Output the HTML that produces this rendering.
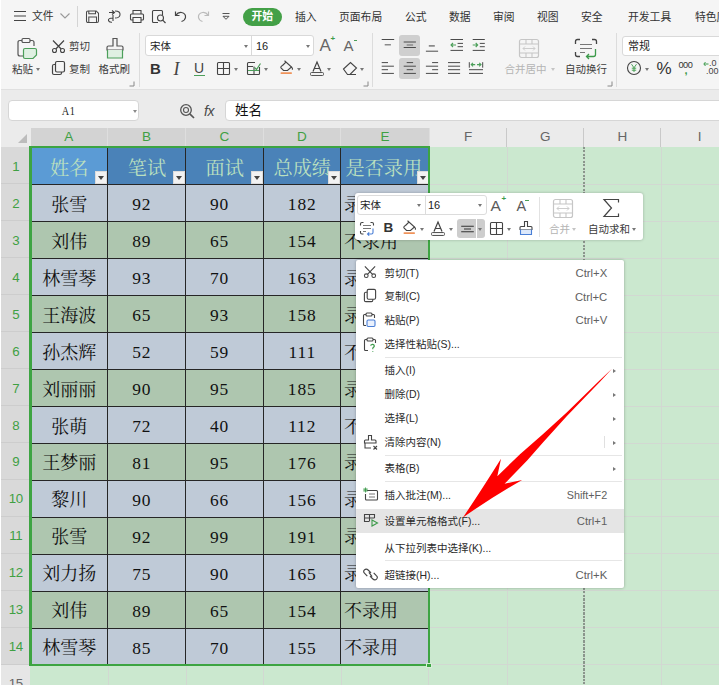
<!DOCTYPE html>
<html lang="zh-CN">
<head>
<meta charset="utf-8">
<title>WPS 表格</title>
<style>
html,body{margin:0;padding:0;}
body{width:719px;height:685px;overflow:hidden;background:#fff;}
#app{position:relative;width:719px;height:685px;overflow:hidden;background:#ebebeb;
 font-family:"Liberation Sans","Noto Sans CJK SC",sans-serif;color:#333;}
#app div,#app span,#app i,#app u,#app b,#app svg{position:absolute;box-sizing:border-box;}
#app u{text-decoration:none;}
#app i{font-style:normal;}
#app b{font-weight:normal;}
/* ---------- ribbon ---------- */
#ribbon{left:0;top:0;width:719px;height:89.5px;background:#f5f5f5;}
#ribbon .whiteedge{left:0;top:0;width:1.2px;height:89.5px;background:#fff;}
.t{white-space:nowrap;line-height:1;}
.menu{top:10.5px;font-size:10.8px;color:#333;}
.lbl{font-size:10.5px;color:#3c3c3c;}
.dis{color:#b4b4b4;}
.vsep{width:1px;background:#dcdcdc;}
.inp{background:#fff;border:1px solid #d9d9d9;border-radius:3px;}
.caret{width:0;height:0;border-left:2.5px solid transparent;border-right:2.5px solid transparent;border-top:3px solid #777;}
.hl{background:#cfcfcf;border-radius:3px;}
/* ---------- formula bar ---------- */
#fbar{left:0;top:89.300px;width:719px;height:38.700px;background:#ebebeb;border-top:1px solid #e0e0e0;}
#fbar .whiteedge{left:0;top:0;width:1.2px;height:60px;background:#fff;}
#namebox{left:8px;top:10.200px;width:131px;height:20.500px;background:#fff;border-radius:4px;border:1px solid #d6d6d6;}
#namebox .t{left:0;width:119px;top:4px;text-align:center;font-family:"Liberation Serif","Noto Serif CJK SC",serif;font-size:12.500px;letter-spacing:0.600px;color:#222;transform:scaleX(0.820);}
#finput{left:225px;top:10.200px;width:500px;height:20.500px;background:#fff;border-radius:4px;border:1px solid #d6d6d6;}
#finput .t{left:9px;top:2.5px;font-size:13.5px;color:#111;}
/* ---------- sheet ---------- */
#sheet{left:0;top:0;width:719px;height:685px;}
#app:after{content:"";position:absolute;left:0;top:0;width:1.2px;height:685px;background:#fff;}
#sheet:before{content:"";position:absolute;left:30px;top:147px;width:689px;height:538px;background:#cbe8cf;}
.colhdr-bg{left:0;top:128px;width:719px;height:19px;background:#ebebeb;}
.corner{left:1.200px;top:128px;width:29px;height:19px;background:transparent;}
.corner i{right:3.700px;bottom:4px;width:0;height:0;border-left:9.500px solid transparent;border-bottom:9.500px solid #bcbcbc;}
.ch{top:128.200px;height:18.800px;line-height:18px;text-align:center;font-size:13.5px;color:#666;border-right:1px solid #c9c9c9;}
.ch.sel{background:#d3d3d3;color:#3fa043;border-right:1px solid #dedede;}
.rh{left:1.2px;width:29px;padding-top:2px;text-align:center;font-size:13.300px;letter-spacing:-0.400px;color:#666;background:#e6e6e6;border-bottom:1px solid #cfcfcf;display:flex;align-items:center;justify-content:center;}
.rh.sel{background:#d9d9d9;color:#3fa043;border-bottom:1px solid #cdcdcd;}
.gv{top:147px;width:1px;height:540px;background:#d2d8d2;}
.gh{left:30px;width:690px;height:1px;background:#d2d8d2;}
.pagebreak{left:583.400px;top:147px;width:1.300px;height:540px;background:repeating-linear-gradient(to bottom,#8a968c 0,#8a968c 2px,transparent 2px,transparent 3.500px);}
.c{font-family:"Liberation Serif","Noto Serif CJK SC",serif;font-size:18px;color:#111;display:flex;align-items:center;justify-content:center;}
.c span{position:static !important;white-space:nowrap;transform:translateY(0px);}
.c.n span{transform:translateY(1.900px);font-size:17.400px;letter-spacing:0.900px;}
.c.h{background:#4a82b8;color:#bbe0bf;font-size:19.2px;}
.c.h.e{padding-right:3.5px;}
.c.h.a1{background:#5b9bd5;}
.c.h span{transform:translateY(0.600px);}
.c.b{background:#bfcad7;}
.c.g{background:#aec6af;}
.c.n2{padding-right:10.5px;}
.c.l{justify-content:flex-start;padding-left:3px;}
.dd{right:1px;bottom:0.6px;width:12px;height:12.5px;background:#f2f2f2;border:1px solid #dcdcdc;}
.dd:after{content:"";position:absolute;left:2px;top:3.500px;width:0;height:0;border-left:3px solid transparent;border-right:3px solid transparent;border-top:4px solid #444;}
.bv{top:147px;width:1.100px;height:518px;background:#262626;}
.bh{left:30px;width:400px;height:1.100px;background:#262626;}
.selbox{border:2.500px solid #3da442;border-left-width:3.300px;}
.selhandle{width:3.500px;height:3.500px;background:#3da442;border:1px solid #d8eeda;box-sizing:content-box !important;}
/* ---------- mini toolbar ---------- */
#mini{left:355px;top:192.800px;width:288px;height:47.200px;background:#fff;border-radius:3px;box-shadow:0 0 3px rgba(0,0,0,.25);}
/* ---------- context menu ---------- */
#ctx{left:355.500px;top:259.800px;width:268.700px;height:328.100px;background:#fff;border-radius:2px;box-shadow:0 0 3px rgba(0,0,0,.3);}
.mi{left:0;width:268px;height:24px;margin-top:0.700px;}
.mi .t{left:29px;top:6.500px;font-size:10.500px;color:#2a2a2a;}
.mi .k{left:auto;right:16.300px;top:6.800px;font-size:11.300px;color:#606060;}
.mi.on{background:#e5e5e5;left:0;width:268.500px;}
.msep{left:29px;width:237px;height:1px;background:#e6e6e6;margin-top:0.700px;}
.arr{right:7.600px;width:0;height:0;margin-top:0.800px;border-top:2.600px solid transparent;border-bottom:2.600px solid transparent;border-left:3.300px solid #777;}

</style>
</head>
<body>
<div id="app">
<div id="ribbon">
<div class="whiteedge"></div>
<!-- row 1 : quick access + tabs -->
<svg style="left:13px;top:10px" width="14" height="12" viewBox="0 0 14 12"><path d="M1 1.5H13M1 6H13M1 10.5H13" stroke="#444" stroke-width="1.2" fill="none"/></svg>
<span class="t menu" style="left:32px">文件</span>
<svg style="left:59px;top:12px" width="12" height="8" viewBox="0 0 12 8"><path d="M1.5 1.5L6 6L10.5 1.5" stroke="#999" stroke-width="1.1" fill="none"/></svg>
<div class="vsep" style="left:77px;top:6px;height:21px;background:#d4d4d4"></div>
<!-- save -->
<svg style="left:85px;top:9px" width="15" height="15" viewBox="0 0 15 15"><path d="M3 2H11.200L13.500 4.300V12Q13.500 13.500 12 13.500H3Q1.500 13.500 1.500 12V3.500Q1.500 2 3 2ZM3.800 2V4.800H10.500V2.200M3.800 13.500V8H11.500V13.500" stroke="#4a4a4a" stroke-width="1.050" fill="none"/></svg>
<!-- export-ish -->
<svg style="left:106px;top:9px" width="16" height="15" viewBox="0 0 16 15"><path d="M3 3.5H8M6 1.5L8.5 3.5L6 5.5M9 2Q14.5 2 14 6Q13.5 9 9 9M7 6V12M7 9Q2 9 2.5 11.5Q3 13.5 6 13.2" stroke="#444" stroke-width="1.1" fill="none"/></svg>
<!-- print -->
<svg style="left:129px;top:9px" width="16" height="15" viewBox="0 0 16 15"><path d="M4 5V1.5H12V5M4 11H2.5Q1.5 11 1.5 10V6Q1.5 5 2.5 5H13.5Q14.5 5 14.5 6V10Q14.5 11 13.5 11H12M4 8.5H12V13.5H4Z" stroke="#444" stroke-width="1.1" fill="none"/></svg>
<!-- preview -->
<svg style="left:151px;top:9px" width="16" height="15" viewBox="0 0 16 15"><path d="M11.5 6V2.5Q11.5 1.5 10.5 1.5H2.5Q1.5 1.5 1.5 2.5V12.5Q1.5 13.5 2.5 13.5H7" stroke="#444" stroke-width="1.1" fill="none"/><circle cx="9.5" cy="9" r="3" stroke="#444" stroke-width="1.1" fill="none"/><path d="M11.7 11.2L14.5 14" stroke="#444" stroke-width="1.2"/></svg>
<!-- undo -->
<svg style="left:174px;top:10px" width="14" height="13" viewBox="0 0 14 13"><path d="M1.5 1.5V5.5H5.5M1.8 5.3Q4 2 7.5 2.5Q12 3.5 11.5 7.5Q11 10.5 7.5 11.5" stroke="#444" stroke-width="1.2" fill="none"/></svg>
<!-- redo -->
<svg style="left:196px;top:10px" width="14" height="13" viewBox="0 0 14 13"><path d="M12.5 1.5V5.5H8.5M12.2 5.3Q10 2 6.5 2.5Q2 3.5 2.5 7.5Q3 10.5 6.5 11.5" stroke="#bbb" stroke-width="1.2" fill="none"/></svg>
<!-- more -->
<svg style="left:219.500px;top:11.500px" width="12" height="11" viewBox="0 0 12 11"><path d="M2.500 1.500H9.500M3 4.300H9L6 7.300Z" stroke="#555" stroke-width="1" fill="none"/></svg>
<div style="left:243px;top:7.5px;width:38.5px;height:18px;border-radius:9px;background:#43a047"></div>
<span class="t menu" style="left:251.500px;color:#fff;font-weight:bold;font-size:10.800px;top:11px">开始</span>
<span class="t menu" style="left:295px;top:11.500px">插入</span>
<span class="t menu" style="left:339px;top:11.500px">页面布局</span>
<span class="t menu" style="left:405px;top:11.500px">公式</span>
<span class="t menu" style="left:449px;top:11.500px">数据</span>
<span class="t menu" style="left:493px;top:11.500px">审阅</span>
<span class="t menu" style="left:537px;top:11.500px">视图</span>
<span class="t menu" style="left:581px;top:11.500px">安全</span>
<span class="t menu" style="left:628px;top:11.500px">开发工具</span>
<span class="t menu" style="left:695px;top:11.500px">特色应用</span>

<!-- clipboard group -->
<svg style="left:16px;top:36.500px" width="22" height="24" viewBox="0 0 22 24"><path d="M6 3.5H4Q2 3.5 2 5.5V17Q2 19 4 19H7" stroke="#555" stroke-width="1.2" fill="none"/><path d="M14 3.5H16Q18 3.5 18 5.5V9" stroke="#555" stroke-width="1.2" fill="none"/><rect x="6" y="1.5" width="8" height="4" rx="1.2" stroke="#555" stroke-width="1.2" fill="#f5f5f5"/><path d="M9 11.5H19Q20.5 11.5 20.5 13V18L17 21.5H9Q7.5 21.5 7.5 20V13Q7.5 11.5 9 11.5Z" stroke="#4c9f5a" stroke-width="1.2" fill="#dff0e2"/></svg>
<span class="t lbl" style="left:12px;top:64px">粘贴</span>
<i class="caret" style="left:36px;top:68px"></i>
<!-- cut -->
<svg style="left:51px;top:38.500px" width="15" height="15" viewBox="0 0 15 15"><path d="M2 1.5L10.2 10M13 1.5L4.8 10" stroke="#444" stroke-width="1.2" fill="none"/><circle cx="3.5" cy="11.5" r="2" stroke="#444" stroke-width="1.1" fill="none"/><circle cx="11.5" cy="11.5" r="2" stroke="#444" stroke-width="1.1" fill="none"/></svg>
<span class="t lbl" style="left:69px;top:41.200px">剪切</span>
<!-- copy -->
<svg style="left:51px;top:60px" width="15" height="16" viewBox="0 0 15 16"><rect x="4.5" y="1.5" width="9" height="10.5" rx="1.5" stroke="#444" stroke-width="1.2" fill="none"/><path d="M4.5 4.5H3Q1.5 4.5 1.5 6V13Q1.5 14.5 3 14.5H9Q10.5 14.5 10.5 13V12" stroke="#444" stroke-width="1.2" fill="none"/></svg>
<span class="t lbl" style="left:69px;top:64px">复制</span>
<!-- format painter -->
<svg style="left:105px;top:37px" width="20" height="23" viewBox="0 0 20 23"><path d="M8 1.5H12V9H16.5Q18 9 18 10.5V13H2V10.5Q2 9 3.5 9H8Z" stroke="#555" stroke-width="1.2" fill="none"/><path d="M2.5 13V21H17.5V13" stroke="#4c9f5a" stroke-width="1.2" fill="#dff0e2"/></svg>
<span class="t lbl" style="left:98.5px;top:64px">格式刷</span>
<svg style="left:129px;top:81px" width="6" height="6" viewBox="0 0 6 6"><path d="M5 0.5V5H0.5" stroke="#888" stroke-width="1" fill="none"/></svg>
<div class="vsep" style="left:139px;top:33px;height:54px"></div>

<!-- font group -->
<div class="inp" style="left:145px;top:35px;width:169px;height:21px"></div>
<div class="vsep" style="left:251px;top:35.500px;height:20px;background:#d9d9d9"></div>
<span class="t" style="left:150px;top:41px;font-size:10.500px;color:#222">宋体</span>
<i class="caret" style="left:244px;top:45px"></i>
<span class="t" style="left:256px;top:41px;font-size:11px;color:#222">16</span>
<i class="caret" style="left:306px;top:45px"></i>
<span class="t" style="left:319.500px;top:37px;font-size:17px;color:#666">A</span>
<span class="t" style="left:330.5px;top:34.5px;font-size:8px;color:#3c9a4a;font-weight:bold">+</span>
<span class="t" style="left:343.500px;top:38px;font-size:15px;color:#666">A</span>
<div style="left:353.500px;top:39.500px;width:3.500px;height:1.200px;background:#4c9f5a"></div>
<span class="t" style="left:150px;top:61px;font-size:15px;color:#333;font-weight:bold">B</span>
<span class="t" style="left:173.500px;top:59.500px;font-size:18px;color:#444;font-style:italic;font-family:'Liberation Serif',serif">I</span>
<span class="t" style="left:194px;top:61px;font-size:14px;color:#444">U</span>
<div style="left:194px;top:75px;width:10.5px;height:1.2px;background:#4c9f5a"></div>
<!-- borders -->
<svg style="left:216px;top:61px" width="15" height="15" viewBox="0 0 15 15"><rect x="1.5" y="1.5" width="12" height="12" rx="1" stroke="#444" stroke-width="1.1" fill="none"/><path d="M7.5 1.5V13.5M1.5 7.5H13.5" stroke="#444" stroke-width="1.1"/></svg>
<i class="caret" style="left:234px;top:68px"></i>
<!-- table style -->
<svg style="left:246px;top:61px" width="16" height="15" viewBox="0 0 16 15"><path d="M13.5 6V12.5Q13.5 13.5 12.5 13.5H2.5Q1.5 13.5 1.5 12.5V2.5Q1.5 1.5 2.5 1.5H9M1.5 5.5H7M8 5.5V13.5" stroke="#444" stroke-width="1.1" fill="none"/><path d="M2 9.5H13M8.5 6.5L10.5 8.5L14.5 2.5" stroke="#4c9f5a" stroke-width="1.2" fill="none"/></svg>
<i class="caret" style="left:264px;top:68px"></i>
<!-- fill -->
<svg style="left:278px;top:60px" width="17" height="17" viewBox="0 0 17 17"><path d="M4.500 5.500L8 2L13.500 7L9.500 10.500H5.500L3 8Q2.200 6.800 4.500 5.500Z M8 2L6.500 0.800M13.500 7Q15 8.300 14.300 9.800" stroke="#444" stroke-width="1.100" fill="none"/><rect x="2.500" y="12.300" width="11.500" height="1.700" rx="0.800" fill="#f0935a"/></svg>
<i class="caret" style="left:297px;top:68px"></i>
<!-- font color -->
<svg style="left:309px;top:60px" width="16" height="17" viewBox="0 0 16 17"><path d="M4 11.5L8 2L12 11.5M5.5 8.5H10.5" stroke="#444" stroke-width="1.2" fill="none"/><rect x="1.5" y="12.5" width="13" height="3" rx="1" stroke="#555" stroke-width="1" fill="#f2f2f2"/></svg>
<i class="caret" style="left:327px;top:68px"></i>
<!-- eraser -->
<svg style="left:342px;top:61px" width="16" height="15" viewBox="0 0 16 15"><path d="M1.5 8L8.5 1.5L14.5 7L8 13.5H5.5Z M6 13.5H14" stroke="#444" stroke-width="1.1" fill="none"/></svg>
<i class="caret" style="left:360px;top:68px"></i>
<svg style="left:363px;top:81px" width="6" height="6" viewBox="0 0 6 6"><path d="M5 0.5V5H0.5" stroke="#888" stroke-width="1" fill="none"/></svg>
<div class="vsep" style="left:372px;top:33px;height:54px"></div>

<!-- alignment group -->
<div class="hl" style="left:399.2px;top:35px;width:21.2px;height:21px"></div>
<div class="hl" style="left:399.2px;top:58px;width:21.2px;height:20.800px"></div>
<svg style="left:375px;top:30px" width="120" height="55" viewBox="0 0 120 55">
<g stroke="#4a4a4a" stroke-width="1" fill="none">
<path d="M6.7 9.5H19.2M28.7 12.0H40.9M28.7 17.5H40.9M50.9 21.2H63.1M75.5 9.5H88.0M82.6 13.4H88.0M82.6 16.7H88.0M75.5 20.4H88.0M97.7 9.5H109.8M104.8 13.4H109.8M104.8 16.7H109.8M97.7 20.4H109.8M6.7 32.6H13.0M6.7 36.2H18.9M6.7 39.7H13.0M6.7 43.4H18.9M31.7 32.6H38.1M28.7 36.2H40.9M31.7 39.7H38.1M28.7 43.4H40.9M57.1 32.6H63.1M50.9 36.2H63.1M57.1 39.7H63.1M50.9 43.4H63.1M73.0 32.6H85.1M73.0 36.2H85.1M73.0 39.7H85.1M73.0 43.4H85.1M94.0 39.7H108.0M94.0 43.4H108.0M94.3 32.2V37.7M107.7 32.2V37.7"/>
</g>
<g stroke="#8a8a8a" stroke-width="1.6" fill="none">
<path d="M9.7 14.7H15.9M31.7 15.0H38.1M53.8 15.9H59.8"/>
</g>
<g stroke="#4c9f5a" stroke-width="1.1" fill="none">
<path d="M76 15H81M78 13L76 15L78 17"/>
<path d="M97.700 15H102.700M100.700 13L102.700 15L100.700 17"/>
<path d="M96.200 34.600H100.200M98 32.800L96.200 34.600L98 36.400M102 34.600H106M104.200 32.800L106 34.600L104.200 36.400"/>
</g>
</svg>
<!-- merge center (disabled) -->
<svg style="left:518px;top:38px" width="22" height="21" viewBox="0 0 22 21"><rect x="1.500" y="1.500" width="19" height="18" rx="2" stroke="#c6c6c6" stroke-width="1.2" fill="none"/><path d="M1.500 6H20.500M1.500 15H20.500M8 1.500V6M14 1.500V6M8 15V19.500M14 15V19.500" stroke="#c6c6c6" stroke-width="1.100" fill="none"/><path d="M5 10.500H17M7 8.500L5 10.500L7 12.500M15 8.500L17 10.500L15 12.500" stroke="#cdcdcd" stroke-width="1" fill="none"/></svg>
<span class="t lbl dis" style="left:504.500px;top:64px">合并居中</span>
<i class="caret" style="left:551px;top:68px;border-top-color:#c4c4c4"></i>
<!-- wrap text -->
<svg style="left:574px;top:38px" width="24" height="22" viewBox="0 0 24 22"><path d="M6 1.500H3.500Q1.500 1.500 1.500 3.500V6M18 1.500H20.500Q22.500 1.500 22.500 3.500V6M1.500 14V16.500Q1.500 18.500 3.500 18.500H6" stroke="#444" stroke-width="1.300" fill="none"/><path d="M6 6.500H18M6 10.500H18M6 14.500H11" stroke="#777" stroke-width="1.100" fill="none"/><path d="M21.500 11V16.500Q21.500 18.500 19.500 18.500H12.500M15 16L12.500 18.500L15 21" stroke="#3c9a4a" stroke-width="1.300" fill="none"/></svg>
<span class="t lbl" style="left:565px;top:64px">自动换行</span>
<svg style="left:607px;top:81px" width="6" height="6" viewBox="0 0 6 6"><path d="M5 0.500V5H0.500" stroke="#888" stroke-width="1" fill="none"/></svg>
<div class="vsep" style="left:616px;top:33px;height:54px"></div>
<!-- number group -->
<div class="inp" style="left:622px;top:35.500px;width:110px;height:20.500px"></div>
<span class="t" style="left:628px;top:41px;font-size:11px;color:#222">常规</span>
<svg style="left:626px;top:60px" width="16" height="16" viewBox="0 0 16 16"><circle cx="8" cy="8" r="6.500" stroke="#444" stroke-width="1.100" fill="none"/><path d="M5.500 4.200L8 7.800L10.500 4.200M8 7.800V12M5.800 8.200H10.200M5.800 10.200H10.200" stroke="#3c9a4a" stroke-width="0.900" fill="none"/></svg>
<i class="caret" style="left:645px;top:68px"></i>
<span class="t" style="left:656.500px;top:60px;font-size:17px;color:#333">%</span>
<span class="t" style="left:678.500px;top:60.500px;font-size:9.200px;color:#333;letter-spacing:-0.500px">000</span>
<span class="t" style="left:684.500px;top:65px;font-size:11px;color:#3c9a4a;font-weight:bold">,</span>
<span class="t" style="left:709px;top:59px;font-size:9px;color:#444">.0</span>
<span class="t" style="left:706px;top:67px;font-size:9px;color:#444">.00</span>
<svg style="left:703px;top:61px" width="6" height="6" viewBox="0 0 6 6"><path d="M5.500 3H1M2.500 1L0.800 3L2.500 5" stroke="#3c9a4a" stroke-width="1" fill="none"/></svg>
</div>

<div id="fbar">
<div class="whiteedge"></div>
<div id="namebox"><span class="t">A1</span><i class="caret" style="left:123.500px;top:8.500px;border-top-color:#8a8a8a"></i></div>
<svg style="left:178.500px;top:12.500px" width="17" height="17" viewBox="0 0 17 17"><circle cx="7" cy="7" r="5.300" stroke="#555" stroke-width="1.300" fill="none"/><circle cx="7" cy="7" r="2.500" stroke="#555" stroke-width="1.100" fill="none"/><path d="M10.800 10.800L15 15" stroke="#555" stroke-width="1.700"/></svg>
<span class="t" style="left:204px;top:13.300px;font-size:14px;color:#4a4a4a;font-style:italic;letter-spacing:-0.300px">fx</span>
<div id="finput"><span class="t">姓名</span></div>
</div>
<div id="sheet">
<div class="colhdr-bg"></div>
<div class="corner"><i></i></div>
<div class="ch sel" style="left:30.5px;width:77.5px">A</div>
<div class="ch sel" style="left:108px;width:78px">B</div>
<div class="ch sel" style="left:186px;width:77.5px">C</div>
<div class="ch sel" style="left:263.5px;width:77.5px">D</div>
<div class="ch sel" style="left:341px;width:89px">E</div>
<div class="ch" style="left:430px;width:77px">F</div>
<div class="ch" style="left:507px;width:77.29999999999995px">G</div>
<div class="ch" style="left:584.3px;width:77.20000000000005px">H</div>
<div class="ch" style="left:661.5px;width:77.5px">I</div>
<div class="rh sel" style="top:147.25px;height:36.97px">1</div>
<div class="rh sel" style="top:184.22px;height:36.97px">2</div>
<div class="rh sel" style="top:221.19px;height:36.97px">3</div>
<div class="rh sel" style="top:258.16px;height:36.97px">4</div>
<div class="rh sel" style="top:295.13px;height:36.97px">5</div>
<div class="rh sel" style="top:332.10px;height:36.97px">6</div>
<div class="rh sel" style="top:369.07px;height:36.97px">7</div>
<div class="rh sel" style="top:406.04px;height:36.97px">8</div>
<div class="rh sel" style="top:443.01px;height:36.97px">9</div>
<div class="rh sel" style="top:479.98px;height:36.97px">10</div>
<div class="rh sel" style="top:516.95px;height:36.97px">11</div>
<div class="rh sel" style="top:553.92px;height:36.97px">12</div>
<div class="rh sel" style="top:590.89px;height:36.97px">13</div>
<div class="rh sel" style="top:627.86px;height:36.97px">14</div>
<div class="rh" style="top:664.83px;height:36.97px">15</div>
<div class="rh" style="top:701.80px;height:36.97px">16</div>
<div class="gv" style="left:107.5px"></div>
<div class="gv" style="left:185.5px"></div>
<div class="gv" style="left:263.0px"></div>
<div class="gv" style="left:340.5px"></div>
<div class="gv" style="left:428.4px"></div>
<div class="gv" style="left:506.5px"></div>
<div class="gv" style="left:583.8px"></div>
<div class="gv" style="left:661.0px"></div>
<div class="gh" style="top:183.72px"></div>
<div class="gh" style="top:220.69px"></div>
<div class="gh" style="top:257.66px"></div>
<div class="gh" style="top:294.63px"></div>
<div class="gh" style="top:331.60px"></div>
<div class="gh" style="top:368.57px"></div>
<div class="gh" style="top:405.54px"></div>
<div class="gh" style="top:442.51px"></div>
<div class="gh" style="top:479.48px"></div>
<div class="gh" style="top:516.45px"></div>
<div class="gh" style="top:553.42px"></div>
<div class="gh" style="top:590.39px"></div>
<div class="gh" style="top:627.36px"></div>
<div class="gh" style="top:664.33px"></div>
<div class="gh" style="top:701.30px"></div>
<div class="pagebreak"></div>
<div class="c h a1" style="left:30.5px;top:147.25px;width:77.5px;height:36.97px"><span>姓名</span><u class="dd"></u></div>
<div class="c h" style="left:108px;top:147.25px;width:78px;height:36.97px"><span>笔试</span><u class="dd"></u></div>
<div class="c h" style="left:186px;top:147.25px;width:77.5px;height:36.97px"><span>面试</span><u class="dd"></u></div>
<div class="c h" style="left:263.5px;top:147.25px;width:77.5px;height:36.97px"><span>总成绩</span><u class="dd"></u></div>
<div class="c h e" style="left:341px;top:147.25px;width:89px;height:36.97px"><span>是否录用</span><u class="dd"></u></div>
<div class="c b" style="left:30.5px;top:184.22px;width:77.5px;height:36.97px"><span>张雪</span></div>
<div class="c b n n2" style="left:108px;top:184.22px;width:78px;height:36.97px"><span>92</span></div>
<div class="c b n n2" style="left:186px;top:184.22px;width:77.5px;height:36.97px"><span>90</span></div>
<div class="c b n" style="left:263.5px;top:184.22px;width:77.5px;height:36.97px"><span>182</span></div>
<div class="c b l" style="left:341px;top:184.22px;width:89px;height:36.97px"><span>录用</span></div>
<div class="c g" style="left:30.5px;top:221.19px;width:77.5px;height:36.97px"><span>刘伟</span></div>
<div class="c g n n2" style="left:108px;top:221.19px;width:78px;height:36.97px"><span>89</span></div>
<div class="c g n n2" style="left:186px;top:221.19px;width:77.5px;height:36.97px"><span>65</span></div>
<div class="c g n" style="left:263.5px;top:221.19px;width:77.5px;height:36.97px"><span>154</span></div>
<div class="c g l" style="left:341px;top:221.19px;width:89px;height:36.97px"><span>不录用</span></div>
<div class="c b" style="left:30.5px;top:258.16px;width:77.5px;height:36.97px"><span>林雪琴</span></div>
<div class="c b n n2" style="left:108px;top:258.16px;width:78px;height:36.97px"><span>93</span></div>
<div class="c b n n2" style="left:186px;top:258.16px;width:77.5px;height:36.97px"><span>70</span></div>
<div class="c b n" style="left:263.5px;top:258.16px;width:77.5px;height:36.97px"><span>163</span></div>
<div class="c b l" style="left:341px;top:258.16px;width:89px;height:36.97px"><span>录用</span></div>
<div class="c g" style="left:30.5px;top:295.13px;width:77.5px;height:36.97px"><span>王海波</span></div>
<div class="c g n n2" style="left:108px;top:295.13px;width:78px;height:36.97px"><span>65</span></div>
<div class="c g n n2" style="left:186px;top:295.13px;width:77.5px;height:36.97px"><span>93</span></div>
<div class="c g n" style="left:263.5px;top:295.13px;width:77.5px;height:36.97px"><span>158</span></div>
<div class="c g l" style="left:341px;top:295.13px;width:89px;height:36.97px"><span>录用</span></div>
<div class="c b" style="left:30.5px;top:332.10px;width:77.5px;height:36.97px"><span>孙杰辉</span></div>
<div class="c b n n2" style="left:108px;top:332.10px;width:78px;height:36.97px"><span>52</span></div>
<div class="c b n n2" style="left:186px;top:332.10px;width:77.5px;height:36.97px"><span>59</span></div>
<div class="c b n" style="left:263.5px;top:332.10px;width:77.5px;height:36.97px"><span>111</span></div>
<div class="c b l" style="left:341px;top:332.10px;width:89px;height:36.97px"><span>不录用</span></div>
<div class="c g" style="left:30.5px;top:369.07px;width:77.5px;height:36.97px"><span>刘丽丽</span></div>
<div class="c g n n2" style="left:108px;top:369.07px;width:78px;height:36.97px"><span>90</span></div>
<div class="c g n n2" style="left:186px;top:369.07px;width:77.5px;height:36.97px"><span>95</span></div>
<div class="c g n" style="left:263.5px;top:369.07px;width:77.5px;height:36.97px"><span>185</span></div>
<div class="c g l" style="left:341px;top:369.07px;width:89px;height:36.97px"><span>录用</span></div>
<div class="c b" style="left:30.5px;top:406.04px;width:77.5px;height:36.97px"><span>张萌</span></div>
<div class="c b n n2" style="left:108px;top:406.04px;width:78px;height:36.97px"><span>72</span></div>
<div class="c b n n2" style="left:186px;top:406.04px;width:77.5px;height:36.97px"><span>40</span></div>
<div class="c b n" style="left:263.5px;top:406.04px;width:77.5px;height:36.97px"><span>112</span></div>
<div class="c b l" style="left:341px;top:406.04px;width:89px;height:36.97px"><span>不录用</span></div>
<div class="c g" style="left:30.5px;top:443.01px;width:77.5px;height:36.97px"><span>王梦丽</span></div>
<div class="c g n n2" style="left:108px;top:443.01px;width:78px;height:36.97px"><span>81</span></div>
<div class="c g n n2" style="left:186px;top:443.01px;width:77.5px;height:36.97px"><span>95</span></div>
<div class="c g n" style="left:263.5px;top:443.01px;width:77.5px;height:36.97px"><span>176</span></div>
<div class="c g l" style="left:341px;top:443.01px;width:89px;height:36.97px"><span>录用</span></div>
<div class="c b" style="left:30.5px;top:479.98px;width:77.5px;height:36.97px"><span>黎川</span></div>
<div class="c b n n2" style="left:108px;top:479.98px;width:78px;height:36.97px"><span>90</span></div>
<div class="c b n n2" style="left:186px;top:479.98px;width:77.5px;height:36.97px"><span>66</span></div>
<div class="c b n" style="left:263.5px;top:479.98px;width:77.5px;height:36.97px"><span>156</span></div>
<div class="c b l" style="left:341px;top:479.98px;width:89px;height:36.97px"><span>录用</span></div>
<div class="c g" style="left:30.5px;top:516.95px;width:77.5px;height:36.97px"><span>张雪</span></div>
<div class="c g n n2" style="left:108px;top:516.95px;width:78px;height:36.97px"><span>92</span></div>
<div class="c g n n2" style="left:186px;top:516.95px;width:77.5px;height:36.97px"><span>99</span></div>
<div class="c g n" style="left:263.5px;top:516.95px;width:77.5px;height:36.97px"><span>191</span></div>
<div class="c g l" style="left:341px;top:516.95px;width:89px;height:36.97px"><span>录用</span></div>
<div class="c b" style="left:30.5px;top:553.92px;width:77.5px;height:36.97px"><span>刘力扬</span></div>
<div class="c b n n2" style="left:108px;top:553.92px;width:78px;height:36.97px"><span>75</span></div>
<div class="c b n n2" style="left:186px;top:553.92px;width:77.5px;height:36.97px"><span>90</span></div>
<div class="c b n" style="left:263.5px;top:553.92px;width:77.5px;height:36.97px"><span>165</span></div>
<div class="c b l" style="left:341px;top:553.92px;width:89px;height:36.97px"><span>录用</span></div>
<div class="c g" style="left:30.5px;top:590.89px;width:77.5px;height:36.97px"><span>刘伟</span></div>
<div class="c g n n2" style="left:108px;top:590.89px;width:78px;height:36.97px"><span>89</span></div>
<div class="c g n n2" style="left:186px;top:590.89px;width:77.5px;height:36.97px"><span>65</span></div>
<div class="c g n" style="left:263.5px;top:590.89px;width:77.5px;height:36.97px"><span>154</span></div>
<div class="c g l" style="left:341px;top:590.89px;width:89px;height:36.97px"><span>不录用</span></div>
<div class="c b" style="left:30.5px;top:627.86px;width:77.5px;height:36.97px"><span>林雪琴</span></div>
<div class="c b n n2" style="left:108px;top:627.86px;width:78px;height:36.97px"><span>85</span></div>
<div class="c b n n2" style="left:186px;top:627.86px;width:77.5px;height:36.97px"><span>70</span></div>
<div class="c b n" style="left:263.5px;top:627.86px;width:77.5px;height:36.97px"><span>155</span></div>
<div class="c b l" style="left:341px;top:627.86px;width:89px;height:36.97px"><span>不录用</span></div>
<div class="bv" style="left:107.4px"></div>
<div class="bv" style="left:185.4px"></div>
<div class="bv" style="left:262.9px"></div>
<div class="bv" style="left:340.4px"></div>
<div class="bh" style="top:183.97px"></div>
<div class="bh" style="top:220.94px"></div>
<div class="bh" style="top:257.91px"></div>
<div class="bh" style="top:294.88px"></div>
<div class="bh" style="top:331.85px"></div>
<div class="bh" style="top:368.82px"></div>
<div class="bh" style="top:405.79px"></div>
<div class="bh" style="top:442.76px"></div>
<div class="bh" style="top:479.73px"></div>
<div class="bh" style="top:516.70px"></div>
<div class="bh" style="top:553.67px"></div>
<div class="bh" style="top:590.64px"></div>
<div class="bh" style="top:627.61px"></div>
<div class="selbox" style="left:29px;top:146.1px;width:401.2px;height:520.4px"></div>
<div class="selhandle" style="left:426.4px;top:662.5px"></div>
</div>
<!-- mini toolbar -->
<div id="mini">
<div class="inp" style="left:1.5px;top:2px;width:130px;height:20.5px;border-color:#dcdcdc"></div>
<div class="vsep" style="left:69.5px;top:2.5px;height:19.5px;background:#dcdcdc"></div>
<span class="t" style="left:5px;top:7px;font-size:10.500px;color:#222">宋体</span>
<i class="caret" style="left:62px;top:11px"></i>
<span class="t" style="left:73px;top:7px;font-size:11px;color:#222">16</span>
<i class="caret" style="left:123px;top:11px"></i>
<span class="t" style="left:135.500px;top:5px;font-size:15.500px;color:#5a5a5a">A</span>
<span class="t" style="left:146.5px;top:2px;font-size:8px;color:#3c9a4a;font-weight:bold">+</span>
<span class="t" style="left:161.500px;top:6px;font-size:14.500px;color:#5a5a5a">A</span>
<div style="left:170px;top:7px;width:3.500px;height:1.200px;background:#4c9f5a"></div>
<div class="vsep" style="left:184px;top:4px;height:40px;background:#e2e2e2"></div>
<!-- merge (disabled) -->
<svg style="left:197px;top:5px" width="22" height="21" viewBox="0 0 22 21"><rect x="1.5" y="1.5" width="19" height="18" rx="2" stroke="#c6c6c6" stroke-width="1.2" fill="none"/><path d="M1.5 6H20.500M1.500 15H20.500M8 1.500V6M14 1.500V6M8 15V19.500M14 15V19.500" stroke="#c6c6c6" stroke-width="1.100" fill="none"/><path d="M5 10.500H17M7 8.500L5 10.500L7 12.500M15 8.500L17 10.500L15 12.500" stroke="#cdcdcd" stroke-width="1" fill="none"/></svg>
<!-- sigma -->
<svg style="left:247px;top:5px" width="19" height="20" viewBox="0 0 19 20"><path d="M16.500 4.500V1.500H2L9.500 10L2 18.500H16.500V15.500" stroke="#444" stroke-width="1.200" fill="none"/></svg>
<!-- row 2 -->
<svg style="left:4px;top:28px" width="16" height="15" viewBox="0 0 16 15"><path d="M4.500 1.500H3Q1.500 1.500 1.500 3V4.500M11.500 1.500H13Q14.500 1.500 14.500 3V4.500M1.500 10V11.500Q1.500 13 3 13H4.500" stroke="#444" stroke-width="1.100" fill="none"/><path d="M4 4.500H12M4 7.500H12M4 10.500H7" stroke="#777" stroke-width="1" fill="none"/><path d="M14 7.500V11.500Q14 13 12.500 13H8.500M10.200 11.300L8.500 13L10.200 14.700" stroke="#4a7fd6" stroke-width="1.100" fill="none"/></svg>
<span class="t" style="left:28.500px;top:28px;font-size:13.500px;color:#333;font-weight:bold">B</span>
<svg style="left:46px;top:27px" width="17" height="17" viewBox="0 0 17 17"><path d="M4.500 5.500L8 2L13.500 7L9.500 10.500H5.500L3 8Q2.200 6.800 4.500 5.500Z M8 2L6.500 0.800M13.500 7Q15 8.300 14.300 9.800" stroke="#444" stroke-width="1.100" fill="none"/><rect x="2.500" y="12.300" width="11.500" height="1.700" rx="0.800" fill="#f0935a"/></svg>
<i class="caret" style="left:64.500px;top:35px"></i>
<svg style="left:75px;top:27px" width="16" height="17" viewBox="0 0 16 17"><path d="M4 11.500L8 2L12 11.500M5.500 8.500H10.500" stroke="#444" stroke-width="1.200" fill="none"/><rect x="1.500" y="12.500" width="13" height="3" rx="1" stroke="#555" stroke-width="1" fill="#f2f2f2"/></svg>
<i class="caret" style="left:93.500px;top:35px"></i>
<div class="hl" style="left:102px;top:26px;width:28px;height:19.500px;background:#cdcdcd"></div>
<div style="left:121px;top:26px;width:1.200px;height:19.500px;background:#fff"></div>
<svg style="left:105px;top:29px" width="15" height="13" viewBox="0 0 15 13"><path d="M1.200 4.200H13.800M4 7H11M1.200 9.800H13.800" stroke="#333" stroke-width="1.100" fill="none"/></svg>
<i class="caret" style="left:123px;top:35px"></i>
<svg style="left:133.500px;top:28px" width="15" height="15" viewBox="0 0 15 15"><rect x="1.500" y="1.500" width="12" height="12" rx="1" stroke="#444" stroke-width="1.100" fill="none"/><path d="M7.500 1.500V13.500M1.500 7.500H13.500" stroke="#444" stroke-width="1.100"/></svg>
<i class="caret" style="left:151.500px;top:35px"></i>
<svg style="left:162.500px;top:27.500px" width="16" height="16" viewBox="0 0 16 16"><path d="M6.500 1.500H9.500V6.500H13Q14 6.500 14 7.500V9.500H2V7.500Q2 6.500 3 6.500H6.500Z" stroke="#444" stroke-width="1.100" fill="none"/><path d="M2.500 9.500V14.500H13.500V9.500" stroke="#4a7fd6" stroke-width="1.100" fill="#dce8fb"/></svg>
<span class="t lbl dis" style="left:194px;top:31px;font-size:10.500px">合并</span>
<i class="caret" style="left:217px;top:35px;border-top-color:#c4c4c4"></i>
<span class="t lbl" style="left:233px;top:31px;font-size:10.500px">自动求和</span>
<i class="caret" style="left:277px;top:35px"></i>
</div>

<!-- context menu -->
<div id="ctx">
<div class="mi" style="top:1px"><svg style="left:7.200px;top:3.700px" width="14" height="14" viewBox="0 0 15 15"><path d="M2 1.500L10.200 10M13 1.500L4.800 10" stroke="#444" stroke-width="1.200" fill="none"/><circle cx="3.500" cy="11.500" r="2" stroke="#444" stroke-width="1.100" fill="none"/><circle cx="11.500" cy="11.500" r="2" stroke="#444" stroke-width="1.100" fill="none"/></svg><span class="t">剪切(T)</span><span class="t k">Ctrl+X</span></div>
<div class="mi" style="top:24.500px"><svg style="left:7.200px;top:3.300px" width="14" height="15" viewBox="0 0 15 16"><rect x="4.500" y="1.500" width="9" height="10.500" rx="1.500" stroke="#444" stroke-width="1.200" fill="none"/><path d="M4.500 4.500H3Q1.500 4.500 1.500 6V13Q1.500 14.500 3 14.500H9Q10.500 14.500 10.500 13V12" stroke="#444" stroke-width="1.200" fill="none"/></svg><span class="t">复制(C)</span><span class="t k">Ctrl+C</span></div>
<div class="mi" style="top:48px"><svg style="left:6.500px;top:4px" width="14" height="16" viewBox="0 0 14 16"><path d="M4 2.500H2.500Q1.500 2.500 1.500 3.500V12.500Q1.500 13.500 2.500 13.500H4M10 2.500H11.500Q12.500 2.500 12.500 3.500V6" stroke="#444" stroke-width="1.100" fill="none"/><rect x="4" y="1" width="6" height="3" rx="1" stroke="#444" stroke-width="1.100" fill="#fff"/><rect x="5" y="8" width="8" height="6.500" rx="1.200" stroke="#4a7fd6" stroke-width="1.100" fill="#eaf1fd"/></svg><span class="t">粘贴(P)</span><span class="t k">Ctrl+V</span></div>
<div class="mi" style="top:72px"><svg style="left:7px;top:4.300px" width="14" height="16" viewBox="0 0 14 16"><path d="M4 2.500H2.500Q1.500 2.500 1.500 3.500V12.500Q1.500 13.500 2.500 13.500H5M10 2.500H11.500Q12.500 2.500 12.500 3.500V6" stroke="#444" stroke-width="1.100" fill="none"/><rect x="4" y="1" width="6" height="3" rx="1" stroke="#444" stroke-width="1.100" fill="#fff"/><path d="M7.500 8.500Q9.500 6.500 11 8Q12 9.500 9.800 11V12.200M9.800 14V14.800" stroke="#3c9a4a" stroke-width="1.100" fill="none"/></svg><span class="t">选择性粘贴(S)...</span></div>
<div class="msep" style="top:96.500px"></div>
<div class="mi" style="top:98px"><span class="t">插入(I)</span><i class="arr" style="top:9.500px"></i></div>
<div class="mi" style="top:122.500px"><span class="t">删除(D)</span><i class="arr" style="top:9.500px"></i></div>
<div class="mi" style="top:146.500px"><span class="t">选择(L)</span><i class="arr" style="top:9.500px"></i></div>
<div class="mi" style="top:170px"><svg style="left:7px;top:4px" width="16" height="16" viewBox="0 0 16 16"><path d="M5.500 1.500H8.500V6H12Q13 6 13 7V9H1.500V7Q1.500 6 2.500 6H5.500Z" stroke="#444" stroke-width="1.100" fill="none"/><path d="M2 9V14H8M10.500 12L14 15.500M14 12L10.500 15.500" stroke="#444" stroke-width="1.100" fill="none"/></svg><span class="t">清除内容(N)</span><i class="arr" style="top:9.500px"></i><div class="vsep" style="left:248px;top:6px;height:12px;background:#e0e0e0"></div></div>
<div class="msep" style="top:195px"></div>
<div class="mi" style="top:196.500px"><span class="t">表格(B)</span><i class="arr" style="top:9.500px"></i></div>
<div class="msep" style="top:221px"></div>
<div class="mi" style="top:223px"><svg style="left:7px;top:4px" width="16" height="15" viewBox="0 0 16 15"><path d="M4 3.500H13.500Q14.500 3.500 14.500 4.500V12Q14.500 13 13.500 13H3.500Q2.500 13 2.500 12V7" stroke="#444" stroke-width="1.100" fill="none"/><path d="M6 7H12M6 10H12" stroke="#777" stroke-width="1" fill="none"/><path d="M2.500 0.500V5.500M0 3H5M0.800 1.200L4.200 4.800M4.200 1.200L0.800 4.800" stroke="#3c9a4a" stroke-width="0.900" fill="none"/></svg><span class="t">插入批注(M)...</span><span class="t k" style="font-size:10.800px">Shift+F2</span></div>
<div class="mi on" style="top:248.500px"><svg style="left:7px;top:3.700px" width="16" height="14" viewBox="0 0 16 14"><path d="M6 8.500H1.500V1.500H11.500V5M1.500 5H11.500M6.500 1.500V8.500" stroke="#444" stroke-width="1.100" fill="none"/><path d="M9 7L14.500 10L9 13Z" stroke="#3c9a4a" stroke-width="1.100" fill="none"/></svg><span class="t" style="top:7px">设置单元格格式(F)...</span><span class="t k" style="right:16.800px;top:7.500px">Ctrl+1</span></div>
<div class="mi" style="top:276px"><span class="t">从下拉列表中选择(K)...</span></div>
<div class="msep" style="top:299.500px"></div>
<div class="mi" style="top:302.600px"><svg style="left:6px;top:3.500px" width="17" height="15" viewBox="0 0 16 14"><path d="M8.500 5.500L6 3Q4 1 2.300 2.700Q0.700 4.300 2.500 6L5 8.500M7.500 8.500L10 11Q12 13 13.700 11.300Q15.300 9.700 13.500 8L11 5.500M6.500 5L9.500 9" stroke="#444" stroke-width="1.100" fill="none"/></svg><span class="t">超链接(H)...</span><span class="t k">Ctrl+K</span></div>
</div>

<!-- red arrow annotation -->
<svg id="arrow" style="left:0;top:0" width="719" height="685" viewBox="0 0 719 685"><path d="M612 368.700L600 380L566.700 412.500L543.400 433.700L520 454.200L497.300 476.200L501 458.700Q484 486 463 517.500Q492 497 522.200 479.900L504.600 483.800L527.600 460L543.400 441.900L566.700 416.200L600 381.700Z" fill="#fe0000"/></svg>
</div>
</body>
</html>
